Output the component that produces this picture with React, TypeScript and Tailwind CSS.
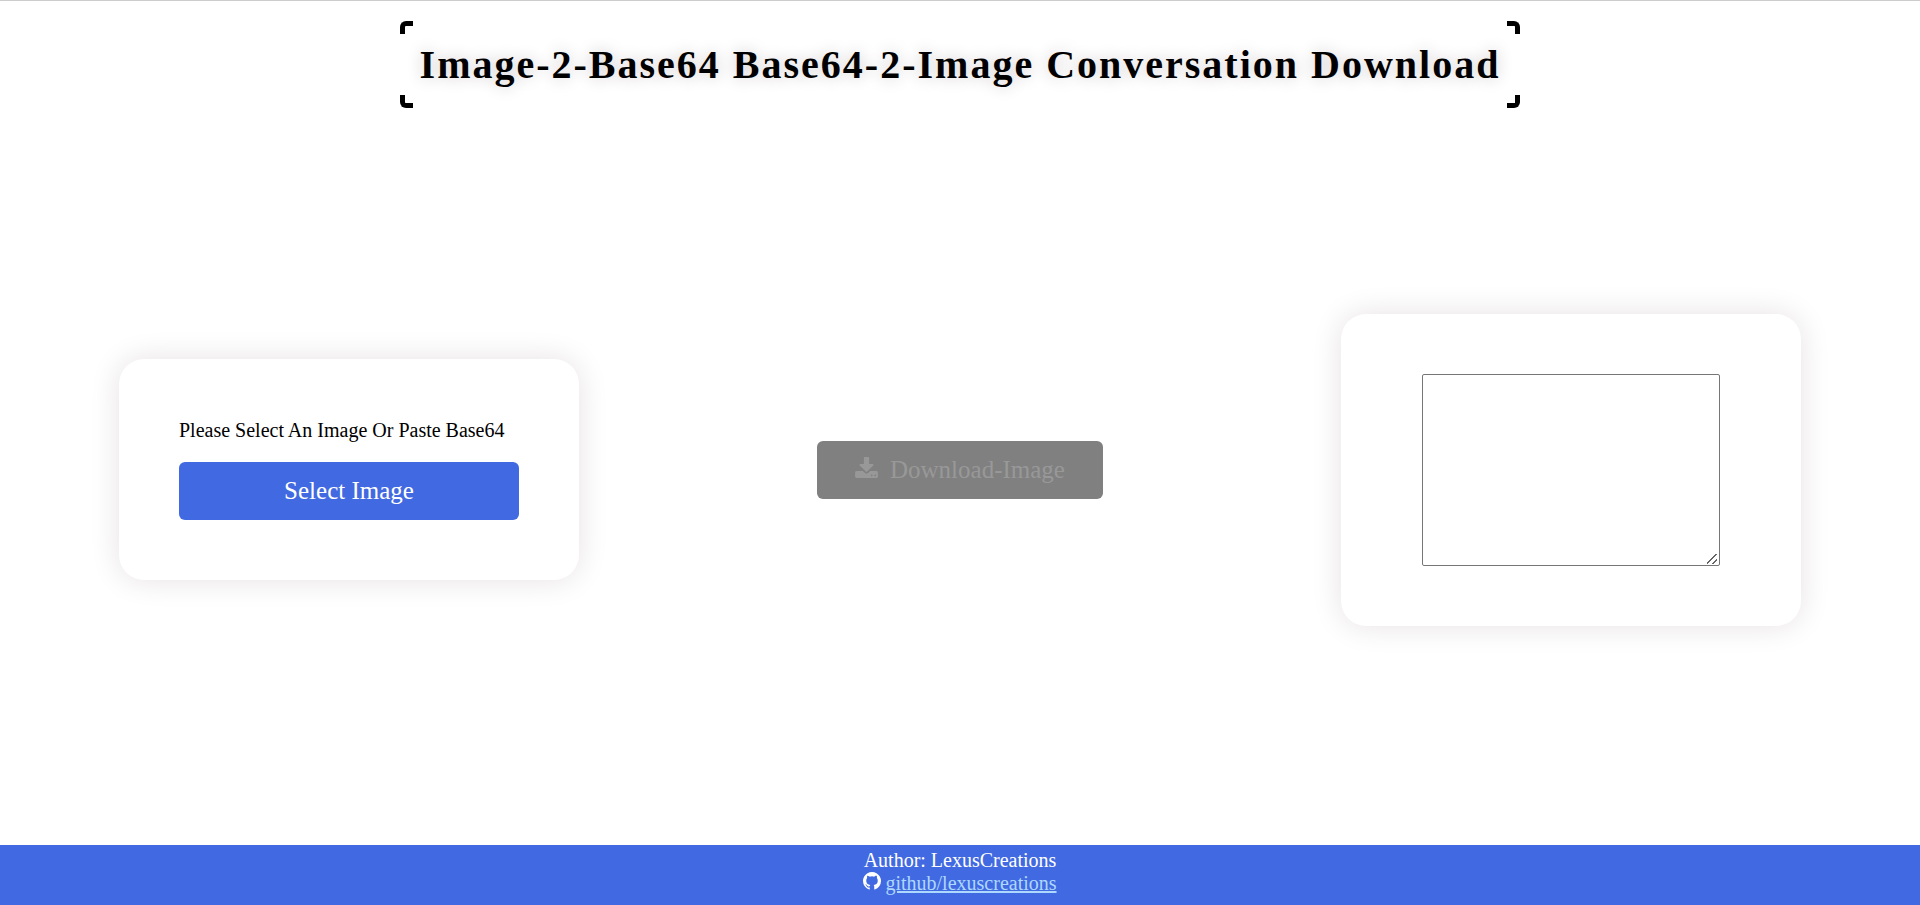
import { useState } from "react";

const corner = "pointer-events-none absolute size-[13px] border-black";

function DownloadIcon() {
  return (
    <svg viewBox="0 0 1664 1536" className="h-[21px] w-[23px] fill-current" aria-hidden="true">
      <path d="M1280 1344q0-26-19-45t-45-19-45 19-19 45 19 45 45 19 45-19 19-45zm256 0q0-26-19-45t-45-19-45 19-19 45 19 45 45 19 45-19 19-45zm128-224v320q0 40-28 68t-68 28h-1472q-40 0-68-28t-28-68v-320q0-40 28-68t68-28h465l135 136q58 56 136 56t136-56l136-136h464q40 0 68 28t28 68zm-325-569q17 41-14 70l-448 448q-18 19-45 19t-45-19l-448-448q-31-29-14-70 17-39 59-39h256v-448q0-26 19-45t45-19h256q26 0 45 19t19 45v448h256q42 0 59 39z" />
    </svg>
  );
}

function GithubIcon() {
  return (
    <svg viewBox="128 128 1536 1536" className="size-[18px] fill-current" aria-hidden="true">
      <path d="M896 128q209 0 385.500 103t279.500 279.500 103 385.500q0 251-146.500 451.500t-378.500 277.500q-27 5-40-7t-13-30q0-3 .5-76.500t.5-134.500q0-97-52-142 57-6 102.500-18t94-39 81-66.500 53-105 20.500-150.500q0-119-79-206 37-91-8-204-28-9-81 11t-92 44l-38 24q-93-26-192-26t-192 26q-16-11-42.500-27t-83.500-38.500-85-13.500q-45 113-8 204-79 87-79 206 0 85 20.500 150t52.500 105 80.500 67 94 39 102.500 18q-39 36-49 103-21 10-45 15t-57 5-65.500-21.500-55.500-62.500q-19-32-48.500-52t-49.500-24l-20-3q-21 0-29 4.500t-5 11.500 9 14 13 12l7 5q22 10 43.500 38t31.500 51l10 23q13 38 44 61.500t67 30 69.500 7 55.500-3.500l23-4q0 38 .5 88.500t.5 54.500q0 18-13 30t-40 7q-232-77-378.500-277.500t-146.500-451.500q0-209 103-385.500t279.500-279.500 385.500-103z" />
    </svg>
  );
}

export default function App() {
  const [code, setCode] = useState("");

  return (
    <div className="flex min-h-screen flex-col border-t border-[#cccccc] bg-white font-['Liberation_Serif',serif] text-xl leading-[23px] text-black">
      <header className="flex justify-center pt-5">
        <div className="relative p-5">
          <h1 className="text-[40px] leading-[47px] font-bold tracking-[2px] [text-shadow:0_0_16px_#cfc8cb]">
            Image-2-Base64 Base64-2-Image Conversation Download
          </h1>
          <span className={`${corner} top-0 left-0 rounded-tl-[6px] border-t-5 border-l-5`} />
          <span className={`${corner} top-0 right-0 rounded-tr-[6px] border-t-5 border-r-5`} />
          <span className={`${corner} bottom-0 left-0 rounded-bl-[6px] border-b-5 border-l-5`} />
          <span className={`${corner} right-0 bottom-0 rounded-br-[6px] border-r-5 border-b-5`} />
        </div>
      </header>

      <main className="flex flex-1 flex-wrap items-center justify-around pb-3.5">
        <section className="flex w-[460px] flex-col gap-5 rounded-[25px] bg-white p-[60px] shadow-[0_0_30px_#e6e1e3]">
          <p>Please Select An Image Or Paste Base64</p>
          <button type="button" className="h-[58px] rounded-md bg-[#4169e1] text-[25px] leading-7 text-white">
            Select Image
          </button>
        </section>

        <button
          type="button"
          disabled
          className="flex h-[58px] w-[286px] items-center justify-center rounded-md bg-[#808080] text-[25px] leading-7 text-[#989898]"
        >
          <span className="flex items-baseline gap-3">
            <DownloadIcon />
            Download-Image
          </span>
        </button>

        <section className="flex w-[460px] justify-center rounded-[25px] bg-white p-[60px] shadow-[0_0_30px_#e6e1e3]">
          <textarea
            aria-label="Base64"
            value={code}
            onChange={(event) => setCode(event.target.value)}
            className="h-48 w-[298px] rounded-[2px] border border-[#767676] bg-white p-0.5 font-mono text-sm [&::-webkit-resizer]:bg-[linear-gradient(135deg,transparent_43%,#666666_43%,#666666_54%,transparent_54%,transparent_73%,#666666_73%,#666666_84%,transparent_84%)] [&::-webkit-resizer]:bg-[length:10px_10px] [&::-webkit-resizer]:bg-[position:3px_4px] [&::-webkit-resizer]:bg-no-repeat"
          />
        </section>
      </main>

      <footer className="flex h-[60px] flex-col items-center bg-[#4169e1] pt-1 text-white">
        <p>Author: LexusCreations</p>
        <p className="flex items-baseline gap-1">
          <GithubIcon />
          <a href="https://github.com/lexuscreations" className="text-[#add8ff] underline">
            github/lexuscreations
          </a>
        </p>
      </footer>
    </div>
  );
}
